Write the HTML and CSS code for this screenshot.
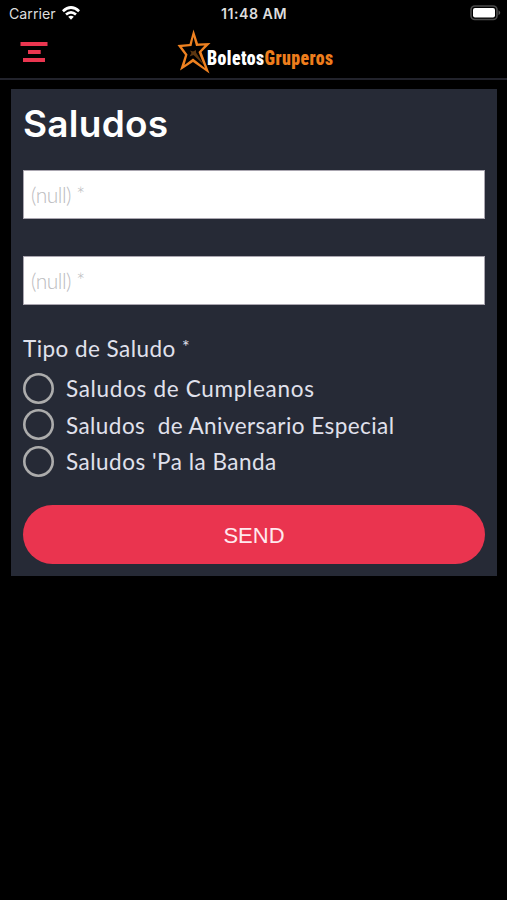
FILE: index.html
```html
<!DOCTYPE html>
<html lang="es">
<head>
<meta charset="utf-8">
<title>Saludos</title>
<link rel="stylesheet" href="styles.css">
</head>
<body>
<header class="top">
  <div class="status">
    <div class="carrier"><span>Carrier</span>
      <svg width="18" height="14" viewBox="0 0 18 14" fill="none" stroke="#fff" stroke-width="2.7"><path d="M.9 5.2Q9-2.200 17.100 5.200"/><path d="M4 8.500Q9 4.200 14 8.500"/><path d="M6.200 10.800Q9 8.600 11.800 10.800L9 13.700Z" fill="#fff" stroke="none"/></svg>
    </div>
    <span class="time">11:48 AM</span>
    <svg class="battery" width="31" height="16" viewBox="0 0 31 16"><rect x="1" y="1" width="26" height="13.5" rx="3.8" fill="none" stroke="#4b4b4b" stroke-width="1.6"/><rect x="3" y="3" width="22" height="9.5" rx="2" fill="#fff"/><path d="M28.5 5.3Q32 7.7 28.5 10.2Z" fill="#555"/></svg>
  </div>
  <nav class="nav">
    <svg class="menu" width="28" height="22" viewBox="0 0 28 22" fill="#ea3650"><path d="M.5 1h27v4H.5zM8 9h12.700v4H8zM3 17h22v4H3z"/></svg>
    <div class="logo">
      <svg width="36" height="48" viewBox="0 0 36 48">
        <path fill="#ee8120" fill-rule="evenodd" d="M17.500 1.500 22 15.500 34.500 15 25.500 24 33.500 45.500 17 34 4 42.500 9 27 1.500 17 13.500 16ZM17.500 9 15.500 18 6 19 11.500 26.500 8.500 37 17 30.500 29 40 22.500 24 28.500 17.500 20 18Z"/>
        <path fill="#5c3610" d="M14 22.500 17 23.500 20 22 20 24.500 28 37 17.500 27 13.500 28.500 15.500 25Z"/>
      </svg>
      <span class="brand"><span class="brand-a">Boletos</span><span class="brand-b">Gruperos</span></span>
    </div>
  </nav>
</header>
<main class="card">
  <h1>Saludos</h1>
  <input class="field" type="text" placeholder="(null) *">
  <input class="field" type="text" placeholder="(null) *">
  <div class="label">Tipo de Saludo <span class="star">*</span></div>
  <div class="options">
    <label class="option"><input type="radio" name="tipo"><span class="o1">Saludos de Cumpleanos</span></label>
    <label class="option"><input type="radio" name="tipo"><span class="o2">Saludos&nbsp; de Aniversario Especial</span></label>
    <label class="option"><input type="radio" name="tipo"><span class="o3">Saludos 'Pa la Banda</span></label>
  </div>
  <button class="send">SEND</button>
</main>
</body>
</html>
```
FILE: styles.css
```css
* { box-sizing: border-box; }
body { margin: 0; min-height: 900px; background: #000; color: #e0e1ec; font-family: Lato, sans-serif; }
.top { height: 80px; border-bottom: 2px solid #22232c; }
.status { height: 28px; padding: 0 6px 0 9px; display: grid; grid-template-columns: 1fr auto 1fr; align-items: center; font: 14.2px Inter, sans-serif; color: #ddd; }
.carrier { display: flex; align-items: center; gap: 6px; margin-top: -1px; }
.carrier svg { margin-top: -1px; }
.time { font-weight: 600; font-size: 14.200px; letter-spacing: .5px; margin-left: -2px; margin-top: -2px; }
.battery { justify-self: end; margin-top: -2px; }
.nav { height: 50px; display: grid; grid-template-columns: 156px 158px; padding-left: 20px; align-items: start; }
.menu { margin-top: 13px; }
.logo { display: flex; height: 48px; }
.logo svg { flex: none; }
.brand { display: flex; flex: none; margin: 19px 0 0 -5px; height: 22px; font: 900 20px/22px Roboto, sans-serif; font-stretch: 75%; letter-spacing: .5px; transform: scaleX(.89); transform-origin: 0 0; }
.brand-a { color: #fff; }
.brand-b { color: #ee7d1c; }
.card { margin: 9px 10px 0 11px; height: 487px; padding: 12px; background: #262a36; display: flex; flex-direction: column; }
h1 { margin: -1px 0 23px; height: 47px; font: 600 37px/47px Inter, sans-serif; letter-spacing: .25px; color: #fff; }
.field { width: 100%; height: 49px; flex: none; margin: 0 0 37px; padding: 0 7px; border: 1px solid #aaa6b0; border-radius: 0; background: #fff; font: 300 21px Lato, sans-serif; letter-spacing: -.5px; }
.field::placeholder { color: #bcbcc0; opacity: 1; }
.label { margin-top: -7px; height: 35px; font-size: 22.5px; line-height: 28px; white-space: nowrap; letter-spacing: .45px; }
.star { font-size: 18px; position: relative; top: -4px; }
.options { margin-bottom: 25px; }
.option { height: 36.500px; display: flex; align-items: center; gap: 12px; font-size: 22.5px; white-space: nowrap; }
.option input { appearance: none; width: 31px; height: 31px; margin: 0; flex: none; border-radius: 50%; box-shadow: inset 0 0 0 2.600px #acacac; }
.o1 { letter-spacing: .69px; }
.o2 { letter-spacing: .44px; padding-top: 1px; }
.o3 { letter-spacing: .5px; }
.send { height: 59px; flex: none; width: 100%; padding: 3px 0 0; border: 0; border-radius: 30px; background: #ea344f; color: #ffe9ee; font: 22px "Liberation Sans", sans-serif; }
```
